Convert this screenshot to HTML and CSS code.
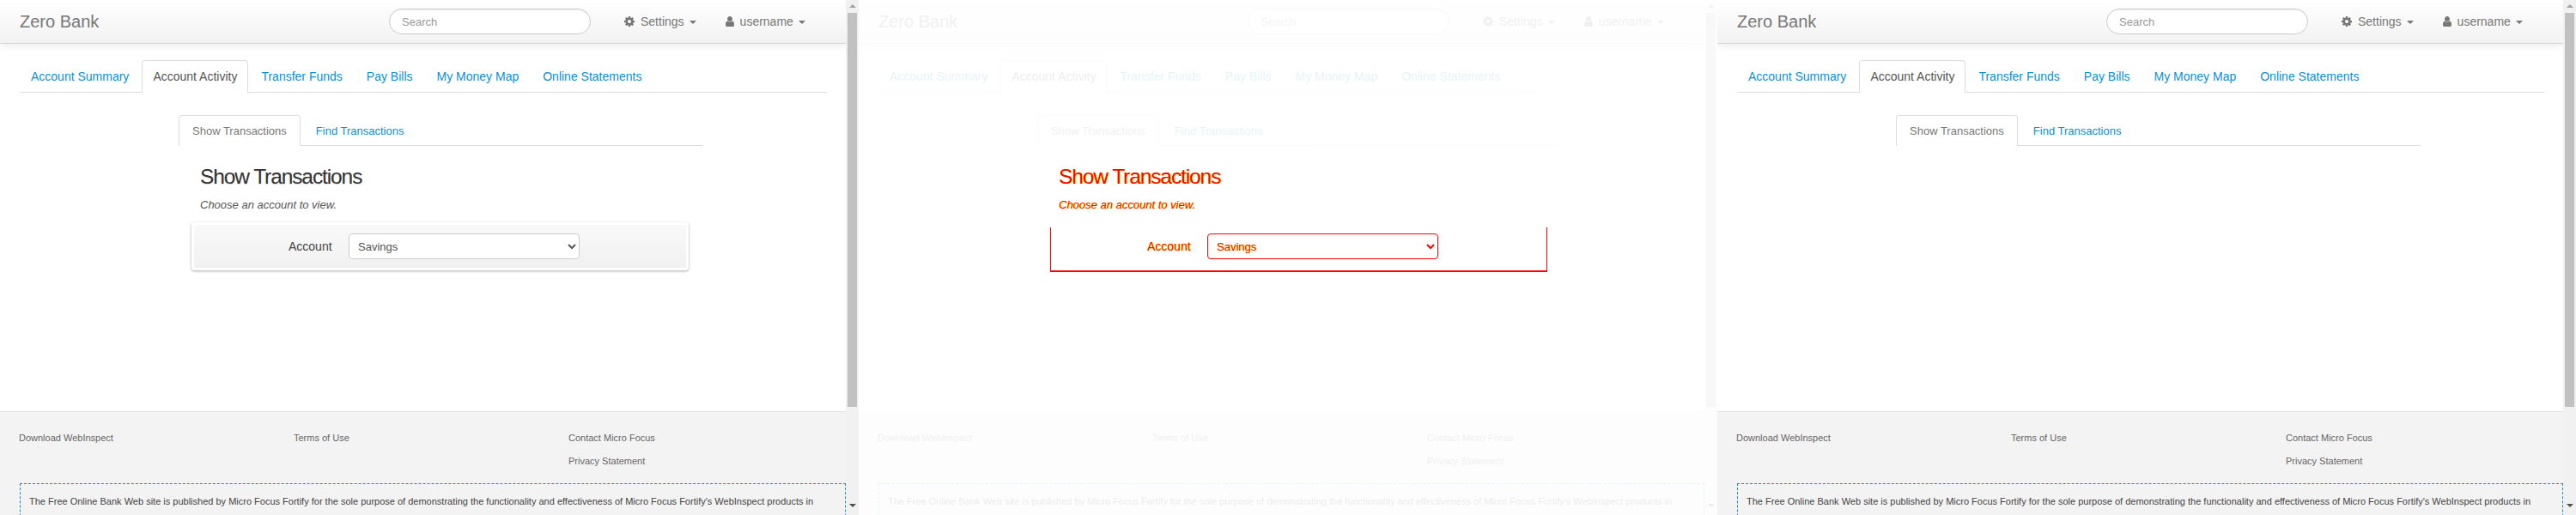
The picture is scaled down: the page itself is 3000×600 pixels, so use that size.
FILE: index.html
```html
<!DOCTYPE html>
<html>
<head lang="en">
    <meta charset="UTF-8">
    <title>Zero Bank - Account Activity</title>
    <link rel="stylesheet" href="styles.css">
</head>
<body>
<div class="shots">

    <!-- baseline -->
    <div class="shot">
        <div class="page">
            <div class="navbar">
                <a class="brand">Zero Bank</a>
                <input class="search" type="text" placeholder="Search">
                <a class="nav-item nav-settings">
                    <svg class="icon" viewBox="0 0 1792 1792"><path d="M1152 896q0-106-75-181t-181-75-181 75-75 181 75 181 181 75 181-75 75-181zm512-109v222q0 12-8 24t-20 13l-185 28q-19 54-39 91 35 50 107 138 10 12 10 25t-9 23q-27 37-99 108t-94 71q-12 0-26-9l-138-108q-44 23-91 38-16 136-29 186-7 28-36 28h-222q-14 0-24.500-8.500t-11.500-21.500l-28-184q-49-16-90-37l-141 107q-10 9-25 9-14 0-25-11-126-114-165-168-7-10-7-23 0-12 8-23 15-21 51-66.500t54-70.500q-27-50-41-99l-183-27q-13-2-21-12.500t-8-23.500v-222q0-12 8-23t19-13l186-28q14-46 39-92-40-57-107-138-10-12-10-24 0-10 9-23 26-36 98.500-107.500t94.500-71.500q13 0 26 10l138 107q44-23 91-38 16-136 29-186 7-28 36-28h222q14 0 24.500 8.500t11.500 21.500l28 184q49 16 90 37l142-107q9-9 24-9 13 0 25 10 129 119 165 170 7 8 7 22 0 12-8 23-15 21-51 66.500t-54 70.500q26 50 41 98l183 28q13 2 21 12.500t8 23.500z"/></svg>
                    Settings <b class="caret"></b>
                </a>
                <a class="nav-item nav-user">
                    <svg class="icon" viewBox="0 0 1792 1792"><path d="M1536 1399q0 109-62.500 187t-150.500 78h-854q-88 0-150.500-78t-62.500-187q0-85 8.500-160.500t31.500-152 58.500-131 94-89 134.500-34.500q131 128 313 128t313-128q76 0 134.500 34.500t94 89 58.500 131 31.500 152 8.500 160.500zm-256-887q0 159-112.500 271.500t-271.500 112.500-271.500-112.500-112.500-271.500 112.500-271.500 271.500-112.500 271.500 112.500 112.500 271.500z"/></svg>
                    username <b class="caret"></b>
                </a>
            </div>
            <div class="content">
                <ul class="tabs main-tabs">
                    <li>Account Summary</li>
                    <li class="active">Account Activity</li>
                    <li>Transfer Funds</li>
                    <li>Pay Bills</li>
                    <li>My Money Map</li>
                    <li>Online Statements</li>
                </ul>
                <div class="sub">
                    <ul class="tabs sub-tabs">
                        <li class="active">Show Transactions</li>
                        <li>Find Transactions</li>
                    </ul>
                    <div class="pane">
                        <h2>Show Transactions</h2>
                        <p class="hint">Choose an account to view.</p>
                        <div class="form-box">
                            <div class="form-row">
                                <label>Account</label>
                                <select><option>Savings</option></select>
                            </div>
                        </div>
                    </div>
                </div>
            </div>
            <div class="footer">
                <div class="foot-links">
                    <ul><li>Download WebInspect</li></ul>
                    <ul><li>Terms of Use</li></ul>
                    <ul><li>Contact Micro Focus</li><li>Privacy Statement</li></ul>
                </div>
                <div class="disclaimer">The Free Online Bank Web site is published by Micro Focus Fortify for the sole purpose of demonstrating the functionality and effectiveness of Micro Focus Fortify's WebInspect products in detecting and reporting Web application vulnerabilities.</div>
            </div>
        </div>
        <div class="scrollbar">
            <i class="arrow-up"></i>
            <i class="thumb"></i>
            <i class="arrow-down"></i>
        </div>
    </div>

    <!-- difference -->
    <div class="shot diff">
        <div class="page">
            <div class="navbar">
                <a class="brand">Zero Bank</a>
                <input class="search" type="text" placeholder="Search">
                <a class="nav-item nav-settings">
                    <svg class="icon" viewBox="0 0 1792 1792"><path d="M1152 896q0-106-75-181t-181-75-181 75-75 181 75 181 181 75 181-75 75-181zm512-109v222q0 12-8 24t-20 13l-185 28q-19 54-39 91 35 50 107 138 10 12 10 25t-9 23q-27 37-99 108t-94 71q-12 0-26-9l-138-108q-44 23-91 38-16 136-29 186-7 28-36 28h-222q-14 0-24.500-8.500t-11.500-21.500l-28-184q-49-16-90-37l-141 107q-10 9-25 9-14 0-25-11-126-114-165-168-7-10-7-23 0-12 8-23 15-21 51-66.500t54-70.500q-27-50-41-99l-183-27q-13-2-21-12.500t-8-23.500v-222q0-12 8-23t19-13l186-28q14-46 39-92-40-57-107-138-10-12-10-24 0-10 9-23 26-36 98.500-107.500t94.500-71.500q13 0 26 10l138 107q44-23 91-38 16-136 29-186 7-28 36-28h222q14 0 24.500 8.500t11.500 21.500l28 184q49 16 90 37l142-107q9-9 24-9 13 0 25 10 129 119 165 170 7 8 7 22 0 12-8 23-15 21-51 66.500t-54 70.500q26 50 41 98l183 28q13 2 21 12.500t8 23.500z"/></svg>
                    Settings <b class="caret"></b>
                </a>
                <a class="nav-item nav-user">
                    <svg class="icon" viewBox="0 0 1792 1792"><path d="M1536 1399q0 109-62.500 187t-150.500 78h-854q-88 0-150.500-78t-62.500-187q0-85 8.500-160.500t31.500-152 58.500-131 94-89 134.500-34.500q131 128 313 128t313-128q76 0 134.500 34.500t94 89 58.500 131 31.500 152 8.500 160.500zm-256-887q0 159-112.500 271.500t-271.500 112.500-271.500-112.500-112.500-271.500 112.500-271.500 271.500-112.500 271.500 112.500 112.500 271.500z"/></svg>
                    username <b class="caret"></b>
                </a>
            </div>
            <div class="content">
                <ul class="tabs main-tabs">
                    <li>Account Summary</li>
                    <li class="active">Account Activity</li>
                    <li>Transfer Funds</li>
                    <li>Pay Bills</li>
                    <li>My Money Map</li>
                    <li>Online Statements</li>
                </ul>
                <div class="sub">
                    <ul class="tabs sub-tabs">
                        <li class="active">Show Transactions</li>
                        <li>Find Transactions</li>
                    </ul>
                    <div class="pane">
                        <h2>Show Transactions</h2>
                        <p class="hint">Choose an account to view.</p>
                        <div class="form-box">
                            <div class="form-row">
                                <label>Account</label>
                                <select><option>Savings</option></select>
                            </div>
                        </div>
                    </div>
                </div>
            </div>
            <div class="footer">
                <div class="foot-links">
                    <ul><li>Download WebInspect</li></ul>
                    <ul><li>Terms of Use</li></ul>
                    <ul><li>Contact Micro Focus</li><li>Privacy Statement</li></ul>
                </div>
                <div class="disclaimer">The Free Online Bank Web site is published by Micro Focus Fortify for the sole purpose of demonstrating the functionality and effectiveness of Micro Focus Fortify's WebInspect products in detecting and reporting Web application vulnerabilities.</div>
            </div>
        </div>
        <div class="scrollbar">
            <i class="arrow-up"></i>
            <i class="thumb"></i>
            <i class="arrow-down"></i>
        </div>
    </div>

    <!-- current -->
    <div class="shot">
        <div class="page">
            <div class="navbar">
                <a class="brand">Zero Bank</a>
                <input class="search" type="text" placeholder="Search">
                <a class="nav-item nav-settings">
                    <svg class="icon" viewBox="0 0 1792 1792"><path d="M1152 896q0-106-75-181t-181-75-181 75-75 181 75 181 181 75 181-75 75-181zm512-109v222q0 12-8 24t-20 13l-185 28q-19 54-39 91 35 50 107 138 10 12 10 25t-9 23q-27 37-99 108t-94 71q-12 0-26-9l-138-108q-44 23-91 38-16 136-29 186-7 28-36 28h-222q-14 0-24.500-8.500t-11.500-21.500l-28-184q-49-16-90-37l-141 107q-10 9-25 9-14 0-25-11-126-114-165-168-7-10-7-23 0-12 8-23 15-21 51-66.500t54-70.500q-27-50-41-99l-183-27q-13-2-21-12.500t-8-23.500v-222q0-12 8-23t19-13l186-28q14-46 39-92-40-57-107-138-10-12-10-24 0-10 9-23 26-36 98.500-107.500t94.500-71.500q13 0 26 10l138 107q44-23 91-38 16-136 29-186 7-28 36-28h222q14 0 24.500 8.500t11.500 21.500l28 184q49 16 90 37l142-107q9-9 24-9 13 0 25 10 129 119 165 170 7 8 7 22 0 12-8 23-15 21-51 66.500t-54 70.500q26 50 41 98l183 28q13 2 21 12.500t8 23.500z"/></svg>
                    Settings <b class="caret"></b>
                </a>
                <a class="nav-item nav-user">
                    <svg class="icon" viewBox="0 0 1792 1792"><path d="M1536 1399q0 109-62.500 187t-150.500 78h-854q-88 0-150.500-78t-62.500-187q0-85 8.500-160.500t31.500-152 58.500-131 94-89 134.500-34.500q131 128 313 128t313-128q76 0 134.500 34.500t94 89 58.500 131 31.500 152 8.500 160.500zm-256-887q0 159-112.500 271.500t-271.500 112.500-271.500-112.500-112.500-271.500 112.500-271.500 271.500-112.500 271.500 112.500 112.500 271.500z"/></svg>
                    username <b class="caret"></b>
                </a>
            </div>
            <div class="content">
                <ul class="tabs main-tabs">
                    <li>Account Summary</li>
                    <li class="active">Account Activity</li>
                    <li>Transfer Funds</li>
                    <li>Pay Bills</li>
                    <li>My Money Map</li>
                    <li>Online Statements</li>
                </ul>
                <div class="sub">
                    <ul class="tabs sub-tabs">
                        <li class="active">Show Transactions</li>
                        <li>Find Transactions</li>
                    </ul>
                </div>
            </div>
            <div class="footer">
                <div class="foot-links">
                    <ul><li>Download WebInspect</li></ul>
                    <ul><li>Terms of Use</li></ul>
                    <ul><li>Contact Micro Focus</li><li>Privacy Statement</li></ul>
                </div>
                <div class="disclaimer">The Free Online Bank Web site is published by Micro Focus Fortify for the sole purpose of demonstrating the functionality and effectiveness of Micro Focus Fortify's WebInspect products in detecting and reporting Web application vulnerabilities.</div>
            </div>
        </div>
        <div class="scrollbar">
            <i class="arrow-up"></i>
            <i class="thumb"></i>
            <i class="arrow-down"></i>
        </div>
    </div>

</div>
</body>
</html>
```
FILE: styles.css
```css
*{
    padding:0;
    margin:0;
    box-sizing:border-box;
}
html,body{
    overflow:hidden;
}
body{
    font-family:"Liberation Sans",Arial,sans-serif;
    font-size:14px;
    color:#555;
    background:#fff;
}
li{
    list-style:none;
}
.shots{
    display:flex;
    width:3000px;
    height:600px;
}
.shot{
    display:flex;
    width:1000px;
    height:600px;
    overflow:hidden;
}
.page{
    width:985px;
    height:600px;
    overflow:hidden;
}

/* navbar */
.navbar{
    display:flex;
    align-items:center;
    height:51px;
    padding-left:23px;
    background:linear-gradient(#fff,#f2f2f2);
    border-bottom:1px solid #d4d4d4;
    box-shadow:0 1px 10px rgba(0,0,0,.1);
    color:#777;
}
.brand{
    font-size:20px;
    width:430px;
}
.search{
    width:235px;
    height:30px;
    padding:0 14px;
    border:1px solid #ccc;
    border-radius:15px;
    font:13px "Liberation Sans",Arial,sans-serif;
    box-shadow:inset 0 1px 1px rgba(0,0,0,.075);
}
.search::placeholder{
    color:#999;
}
.nav-item{
    display:flex;
    align-items:center;
}
.nav-settings{
    margin-left:38px;
}
.nav-user{
    margin-left:32px;
}
.icon{
    width:14px;
    height:14px;
    fill:#777;
    margin-right:6px;
}
.nav-user .icon{
    margin-right:5px;
}
.caret{
    width:0;
    height:0;
    margin-left:6px;
    margin-top:1px;
    border-top:4px solid #777;
    border-left:4px solid transparent;
    border-right:4px solid transparent;
}

/* tabs */
.content{
    height:428px;
    padding-top:19px;
}
.tabs{
    display:flex;
    border-bottom:1px solid #ddd;
    color:#0a8fd6;
}
.tabs li{
    padding:0 12px;
    margin-right:2px;
    border:1px solid transparent;
    border-bottom:0;
    border-radius:4px 4px 0 0;
}
.tabs .active{
    color:#555;
    background:#fff;
    border-color:#ddd;
    margin-bottom:-1px;
}
.main-tabs{
    height:38px;
    margin:0 22px 0 23px;
    line-height:37px;
}
.sub{
    width:611px;
    margin:26px 0 0 208px;
}
.sub-tabs{
    height:36px;
    font-size:13px;
    line-height:35px;
}
.sub-tabs li{
    padding:0 15px;
}
.sub-tabs .active{
    color:#777;
}

/* transactions */
.pane{
    padding-left:25px;
}
h2{
    font-size:24.5px;
    font-weight:normal;
    letter-spacing:-1.1px;
    color:#333;
    line-height:30px;
    margin-top:21px;
    text-shadow:0 1px 1px rgba(0,0,0,.15);
}
.hint{
    font-size:13px;
    font-style:italic;
    line-height:18px;
    margin-top:9px;
}
.form-box{
    width:579px;
    height:56px;
    margin:11px 0 0 -10px;
    padding:3px;
    background:#fff;
    border-radius:4px;
    box-shadow:0 1px 3px rgba(0,0,0,.35);
}
.form-row{
    display:flex;
    align-items:center;
    height:50px;
    padding-left:110px;
    background:linear-gradient(#f9f9f9,#f1f1f1);
    border-radius:3px;
}
label{
    width:70px;
    color:#444;
}
select{
    width:269px;
    height:30px;
    padding-left:6px;
    font:13px "Liberation Sans",Arial,sans-serif;
    color:#555;
    background:#fff;
    border:1px solid #ccc;
    border-radius:4px;
}

/* footer */
.footer{
    height:121px;
    padding:21px 0 0 22px;
    background:#f3f3f3;
    border-top:1px solid #e5e5e5;
    color:#666;
    font-size:11px;
}
.foot-links{
    display:flex;
}
.foot-links ul{
    width:320px;
    height:62px;
}
.foot-links li{
    line-height:18px;
    margin-bottom:9px;
}
.disclaimer{
    width:962px;
    height:120px;
    padding:9px 10px;
    margin-left:1px;
    border:1px dashed #0a8fd6;
    color:#444;
    font-size:11px;
    line-height:22px;
}

/* scrollbar */
.scrollbar{
    display:flex;
    flex-direction:column;
    align-items:center;
    width:15px;
    height:600px;
    background:#f1f1f1;
}
.arrow-up{
    width:0;
    height:0;
    margin:5px 0 6px;
    border-bottom:4px solid #a3a3a3;
    border-left:4px solid transparent;
    border-right:4px solid transparent;
}
.thumb{
    width:11px;
    height:459px;
    background:#c1c1c1;
}
.arrow-down{
    width:0;
    height:0;
    margin-top:113px;
    border-top:4px solid #505050;
    border-left:4px solid transparent;
    border-right:4px solid transparent;
}

/* difference shot: everything faded, changes in red */
.diff .navbar,
.diff .main-tabs,
.diff .sub-tabs,
.diff .footer,
.diff .scrollbar{
    opacity:.1;
}
.diff h2,
.diff .hint,
.diff label,
.diff select{
    color:#f00;
    text-shadow:1px 0 0 #ff0;
}
.diff .form-box{
    position:relative;
    background:none;
    box-shadow:none;
}
.diff .form-box:before{
    content:"";
    position:absolute;
    left:0;
    right:0;
    top:6px;
    bottom:-2px;
    border-left:1px solid #f00;
    border-right:1px solid #f00;
    border-bottom:2px solid #f00;
}
.diff .form-row{
    background:none;
}
.diff select{
    border-color:#f00;
}
```
